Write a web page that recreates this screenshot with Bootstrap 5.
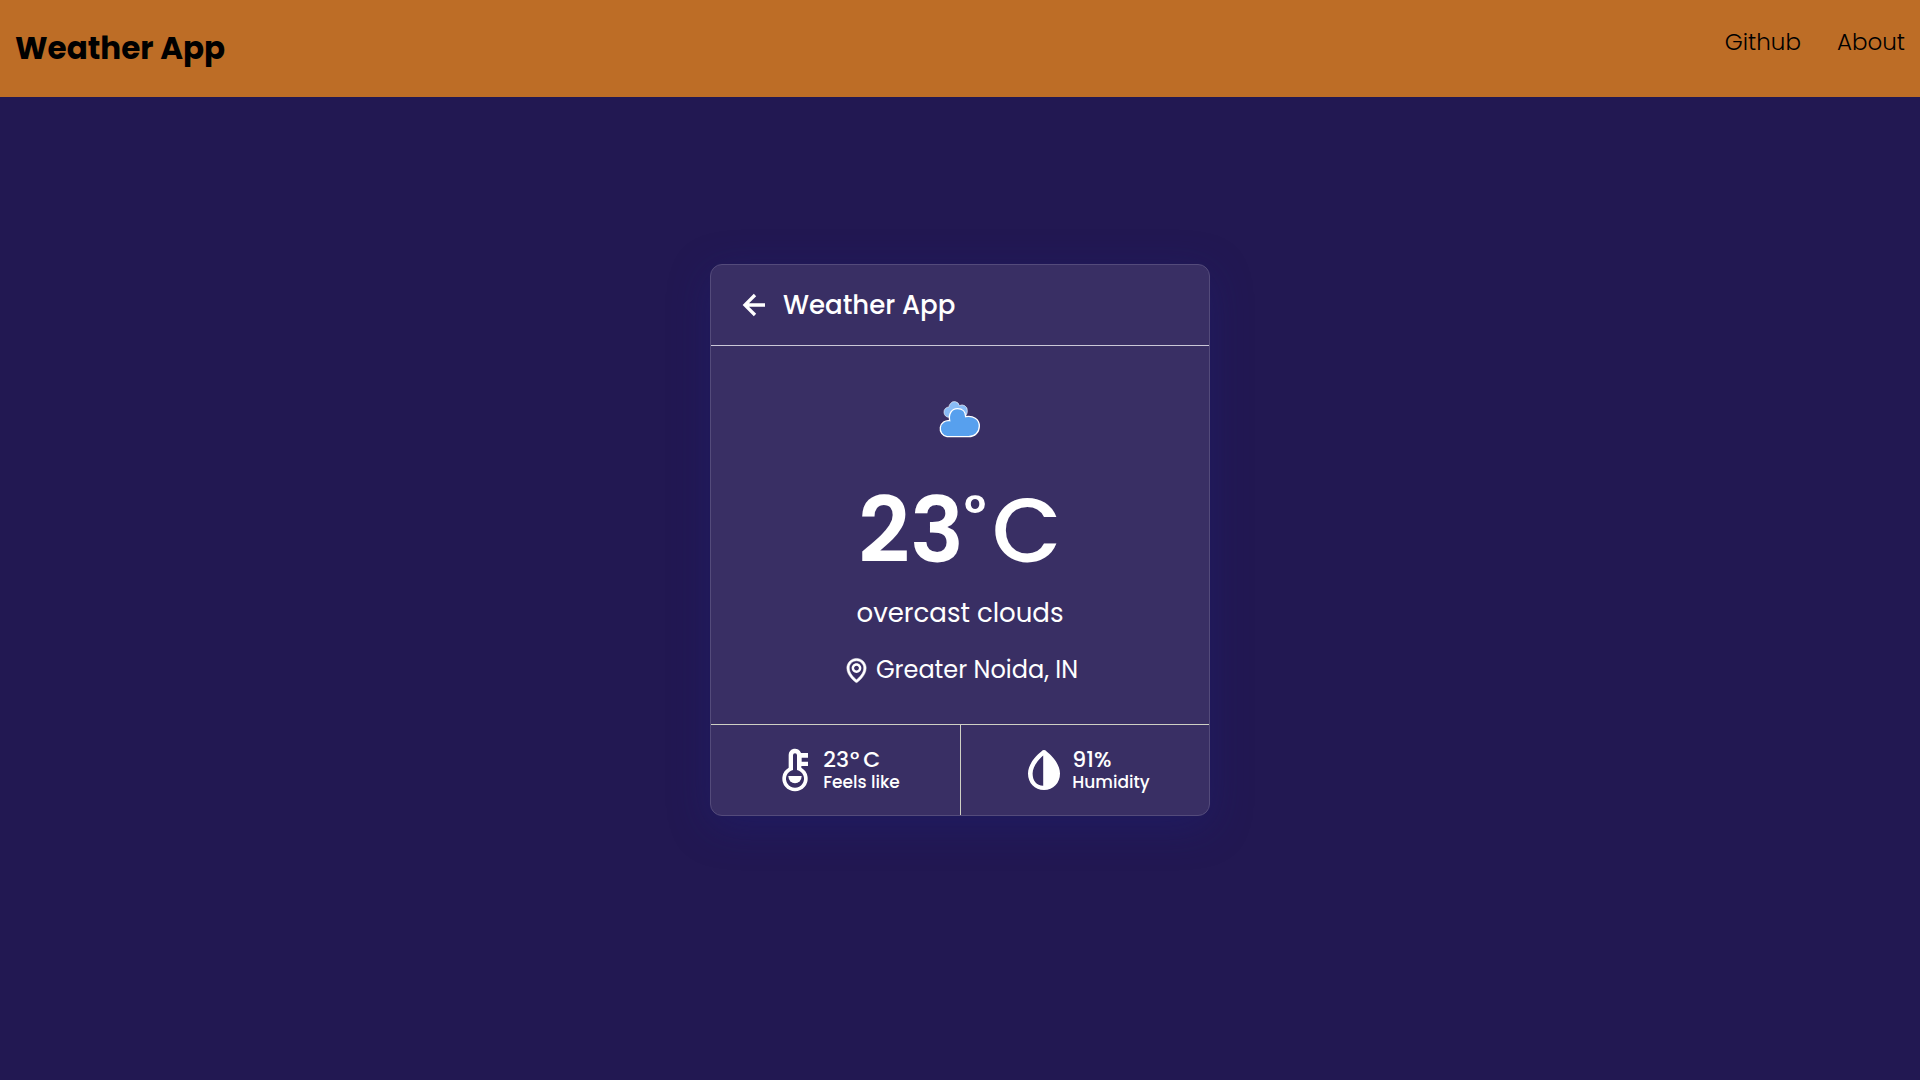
<!DOCTYPE html>
<html lang="en">
<head>
<meta charset="utf-8">
<meta name="viewport" content="width=device-width, initial-scale=1">
<title>Weather App</title>
<link rel="stylesheet" href="https://cdn.jsdelivr.net/npm/bootstrap@5.3.0/dist/css/bootstrap.min.css">
<style>
  body { background: #221852; color: #fff; font-family: Poppins, Inter, "Liberation Sans", sans-serif; }
  .site-bar { background: #bd6d26; padding: 24px 15px 25px; }
  .site-title { font-size: 31px; line-height: 48px; font-weight: 700; color: #000; }
  .site-links { gap: 36px; font-size: 23px; line-height: 36px; font-weight: 300; }
  .site-links a { color: #000; text-decoration: none; }
  .weather { width: 500px; max-width: 100%; color: #fff; background: #392f64; border: 1px solid #544b7b; border-radius: 12px; box-shadow: 0 10px 40px rgba(26, 32, 125, .37); }
  .weather-top { padding: 20px 24px; border-bottom: 1px solid #cbc8d8; gap: 8px; }
  .weather-top h2 { font-size: 26px; line-height: 40px; font-weight: 500; }
  .back-btn { width: 40px; height: 40px; color: #fff; line-height: 0; }
  .weather-main { padding: 48px 24px 38px; }
  .temp { font-size: 90px; line-height: 90px; font-weight: 600; margin-top: 44px; }
  .temp-deg { font-size: 50px; line-height: 50px; margin: 2px 6px 0 0; }
  .temp-unit { font-weight: 500; }
  .sky { font-size: 26px; line-height: 36px; margin-top: 19px; }
  .place { font-size: 24px; line-height: 32px; gap: 5px; margin-top: 23px; }
  .facts { border-top: 1px solid #cfd0c4; }
  .fact { height: 90px; gap: 10px; padding-left: 6px; }
  .fact + .fact { border-left: 1px solid #cfd0c4; }
  .fact-value { font-size: 22px; line-height: 24px; font-weight: 500; }
  .fact-deg { margin: 0 4px 0 1px; }
  .fact-label { font-size: 17px; line-height: 20px; font-weight: 500; }
</style>
</head>
<body>
<header class="site-bar fixed-top d-flex justify-content-between align-items-start">
  <h1 class="site-title mb-0">Weather App</h1>
  <nav class="site-links d-flex" aria-label="Main">
    <a href="#github">Github</a>
    <a href="#about">About</a>
  </nav>
</header>
<main class="min-vh-100 d-flex align-items-center justify-content-center">
  <section class="card weather">
    <div class="weather-top d-flex align-items-center">
      <button type="button" class="btn back-btn p-0 border-0" aria-label="Back">
        <svg width="40" height="40" viewBox="0 0 24 24" fill="currentColor"><path d="M12.707 17.293 8.414 13H18v-2H8.414l4.293-4.293-1.414-1.414L4.586 12l6.707 6.707z"/></svg>
      </button>
      <h2 class="mb-0">Weather App</h2>
    </div>
    <div class="weather-main d-flex flex-column align-items-center">
      <svg width="64" height="48" viewBox="26 42 192 144" aria-hidden="true">
        <path d="M90 115a15 15 0 0 1-16-15 15 15 0 0 1 15-16 15 15 0 0 1 4-10 15 15 0 0 1 27 6 16 16 0 0 1 24 15c0 9-3 15-8 18z" fill="#89bcf6" stroke="#fff" stroke-opacity=".6" stroke-width="3" transform="translate(0 -3)"/>
        <path d="M83 170a24 24 0 1 1 8-48c-4-20 6-36 23-36 16 0 25 10 25 24 22-4 41 7 41 28 0 19-14 32-32 32z" fill="#57a0ee" stroke="#fff" stroke-width="4"/>
      </svg>
      <div class="temp d-flex"><span>23</span><span class="temp-deg">°</span><span class="temp-unit">C</span></div>
      <div class="sky">overcast clouds</div>
      <div class="place d-flex align-items-center">
        <svg width="29" height="29" viewBox="0 0 24 24" fill="currentColor" aria-hidden="true"><path d="M12 14c2.206 0 4-1.794 4-4s-1.794-4-4-4-4 1.794-4 4 1.794 4 4 4zm0-6c1.103 0 2 .897 2 2s-.897 2-2 2-2-.897-2-2 .897-2 2-2z"/><path d="M11.42 21.814a.998.998 0 0 0 1.16 0C12.884 21.599 20.029 16.44 20 10c0-4.411-3.589-8-8-8S4 5.589 4 9.995c-.029 6.445 7.116 11.604 7.42 11.819zM12 4c3.309 0 6 2.691 6 6 .021 4.438-4.388 8.423-6 9.73-1.611-1.308-6.021-5.294-6-9.735 0-3.304 2.691-5.995 6-5.995z" stroke="currentColor" stroke-width=".4"/></svg>
        <span>Greater Noida, IN</span>
      </div>
    </div>
    <div class="facts row g-0">
      <div class="fact col-6 d-flex align-items-center justify-content-center">
        <svg width="36" height="44" viewBox="231 114 108 132" fill="#fff" aria-hidden="true">
          <path fill-rule="evenodd" d="M266 136a19 19 0 0 1 37-7h21v14h-19v12h19v13h-20v5a38 38 0 1 1-38 0zM279 136v44a27 27 0 1 0 12 0v-44a6 6 0 0 0-12 0z"/>
          <path d="M265 198h40a20 22 0 0 1-40 0z"/>
        </svg>
        <div>
          <div class="fact-value">23<span class="fact-deg">°</span>C</div>
          <div class="fact-label">Feels like</div>
        </div>
      </div>
      <div class="fact col-6 d-flex align-items-center justify-content-center">
        <svg width="36" height="48" viewBox="3 0 18 24" fill="#fff" aria-hidden="true"><path fill-rule="evenodd" d="M12 22c4.636 0 8-3.468 8-8.246C20 7.522 12.882 2.4 12.579 2.185a1 1 0 0 0-1.156-.001C11.12 2.397 4 7.503 4 13.75 4 18.53 7.364 22 12 22zM11.600 4.800V19.900C8.200 19.800 6.300 17.300 6.300 13.750c0-3.800 3.500-7.400 5.300-8.950z"/></svg>
        <div>
          <div class="fact-value">91%</div>
          <div class="fact-label">Humidity</div>
        </div>
      </div>
    </div>
  </section>
</main>
<script src="https://cdn.jsdelivr.net/npm/bootstrap@5.3.0/dist/js/bootstrap.bundle.min.js"></script>
</body>
</html>
